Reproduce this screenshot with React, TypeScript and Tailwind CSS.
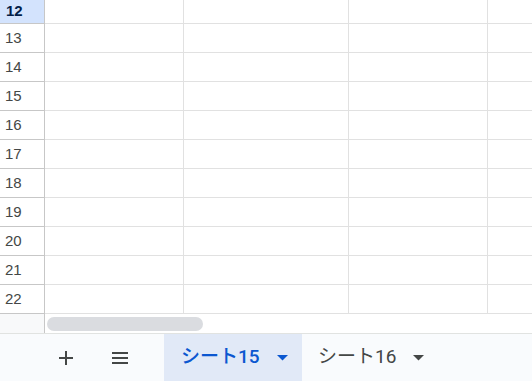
const rows = [13, 14, 15, 16, 17, 18, 19, 20, 21, 22];

const Cells = () => (
  <>
    <div className="w-[139px] shrink-0 border-r border-[#e1e1e1]" />
    <div className="w-[165px] shrink-0 border-r border-[#e1e1e1]" />
    <div className="w-[139px] shrink-0 border-r border-[#e1e1e1]" />
    <div className="flex-1" />
  </>
);

const Caret = ({ color }: { color: string }) => (
  <svg width="11" height="6" viewBox="0 0 11 6">
    <path d="M0 0 L11 0 L5.5 5.5 Z" fill={color} />
  </svg>
);

const App = () => {
  return (
    <div className="w-[532px] h-[381px] overflow-hidden flex flex-col bg-white font-['Liberation_Sans',Arial,sans-serif]">
      {/* row 12 (selected, cut off at top) */}
      <div className="flex h-[24px] shrink-0 border-b border-[#e1e1e1]">
        <div className="w-[45px] shrink-0 bg-[#d3e3fd] border-r border-b border-[#c7c7c7] -mb-px flex items-center pl-[6px] text-[15px] font-bold text-[#041e49]">
          12
        </div>
        <Cells />
      </div>

      {rows.map((r) => (
        <div key={r} className="flex h-[29px] shrink-0 border-b border-[#e1e1e1]">
          <div className="w-[45px] shrink-0 border-r border-b border-[#c7c7c7] -mb-px flex items-center pl-[5px] text-[15px] text-[#444746]">
            {r}
          </div>
          <Cells />
        </div>
      ))}

      {/* horizontal scrollbar */}
      <div className="flex h-[19px] shrink-0">
        <div className="w-[45px] shrink-0 bg-[#f8f9fa] border-r border-[#c7c7c7]" />
        <div className="flex-1 flex items-center pl-[2px]">
          <div className="w-[156px] h-[14px] rounded-full bg-[#dadce0]" />
        </div>
      </div>

      {/* sheet tabs */}
      <div className="flex-1 flex items-stretch bg-[#f9fbfd] border-t border-[#e1e3e1] font-['Roboto','Noto_Sans_CJK_JP',sans-serif]">
        <div className="w-[59px] shrink-0" />
        <div className="w-[14px] flex items-center justify-center">
          <svg width="14" height="14" viewBox="0 0 14 14">
            <path d="M7 0 V14 M0 7 H14" stroke="#444746" strokeWidth="2" />
          </svg>
        </div>
        <div className="w-[39px] shrink-0" />
        <div className="w-[16px] flex items-center justify-center">
          <svg width="16" height="12" viewBox="0 0 16 12">
            <path d="M0 1 H16 M0 6 H16 M0 11 H16" stroke="#444746" strokeWidth="2" />
          </svg>
        </div>
        <div className="w-[36px] shrink-0" />
        <div className="w-[138px] shrink-0 bg-[#e1e9f7] flex items-center pl-[17px] text-[19px] font-medium text-[#0b57d0]">
          <span>シート15</span>
          <span className="ml-[17px] flex">
            <Caret color="#0b57d0" />
          </span>
        </div>
        <div className="flex items-center pl-[16px] text-[19px] text-[#444746]">
          <span>シート16</span>
          <span className="ml-[17px] flex">
            <Caret color="#444746" />
          </span>
        </div>
      </div>
    </div>
  );
};

export default App;
